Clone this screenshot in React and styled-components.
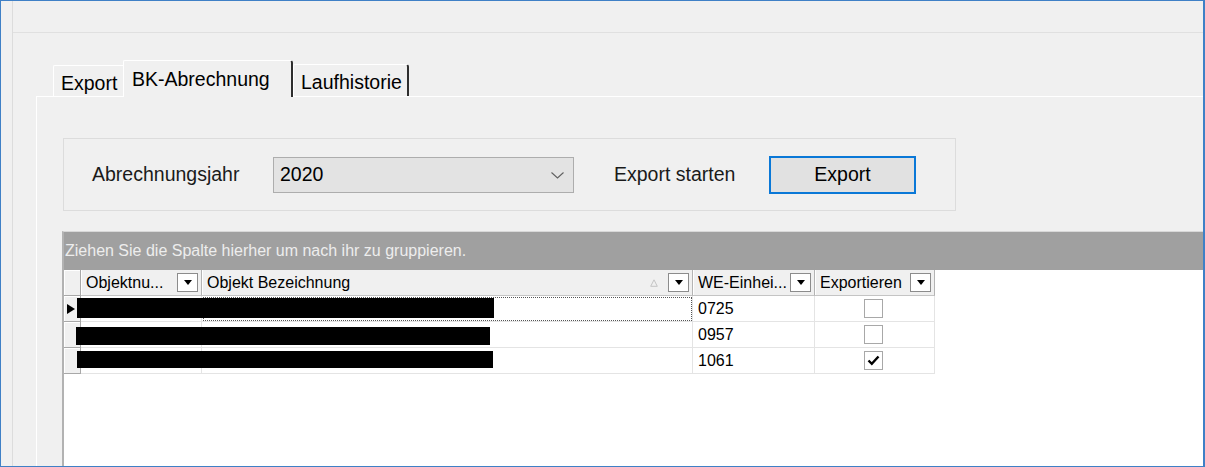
import React from "react";
import styled, { createGlobalStyle } from "styled-components";

const GlobalStyle = createGlobalStyle`
  *, *::before, *::after { box-sizing: border-box; }
  html, body { margin: 0; padding: 0; background: #fff; }
  body { font-family: "Liberation Sans", Arial, sans-serif; color: #000; }
`;

const COLS = "17px 121px 491px 122px 120px";

const rows = [
  { nr: "0725", checked: false, active: true, bar: { left: 13, top: 2, width: 417, height: 20 } },
  { nr: "0957", checked: false, bar: { left: 12, top: 5, width: 414, height: 18 } },
  { nr: "1061", checked: true, bar: { left: 13, top: 3, width: 416, height: 17 } },
];

const Chevron = () => (
  <svg width="13" height="7" viewBox="0 0 13 7">
    <path d="M0.5 0.5 L6.5 6 L12.5 0.5" fill="none" stroke="#606060" strokeWidth="1.1" />
  </svg>
);

const SortMark = () => (
  <svg width="8" height="8" viewBox="0 0 8 8">
    <path d="M4 0.8 L7.3 7.3 L0.7 7.3 Z" fill="none" stroke="#c4c4c4" strokeWidth="1" />
  </svg>
);

const Check = () => (
  <svg width="13" height="11" viewBox="0 0 13 11">
    <path d="M1.5 5.5 L4.8 8.8 L11.5 1.5" fill="none" stroke="#000" strokeWidth="2.4" />
  </svg>
);

const App = () => {
  return (
    <>
      <GlobalStyle />
      <Window>
        <LeftStrip />
        <Main>
          <TopStrip />
          <TabArea>
            <TabStrip>
              <Tab $w={70} $h={31} $pt={6}>Export</Tab>
              <Tab $w={170} $h={37} $pt={7} $active $dark>
                BK-Abrechnung
              </Tab>
              <Tab $w={116} $h={32} $pt={6} $dark>
                Laufhistorie
              </Tab>
            </TabStrip>

            <Panel>
              <GroupBox>
                <FieldLabel $w={181} $ml={28}>Abrechnungsjahr</FieldLabel>
                <Combo>
                  <span>2020</span>
                  <Chevron />
                </Combo>
                <FieldLabel $w={155} $ml={40}>Export starten</FieldLabel>
                <ExportButton>Export</ExportButton>
              </GroupBox>

              <Grid>
                <GroupBand>Ziehen Sie die Spalte hierher um nach ihr zu gruppieren.</GroupBand>
                <HeaderRow>
                  <IndicatorCell $head />
                  <HeadCell>
                    <HeadText>Objektnu...</HeadText>
                    <FilterBtn />
                  </HeadCell>
                  <HeadCell>
                    <HeadText>Objekt Bezeichnung</HeadText>
                    <SortSlot>
                      <SortMark />
                    </SortSlot>
                    <FilterBtn />
                  </HeadCell>
                  <HeadCell>
                    <HeadText>WE-Einhei...</HeadText>
                    <FilterBtn />
                  </HeadCell>
                  <HeadCell>
                    <HeadText>Exportieren</HeadText>
                    <FilterBtn />
                  </HeadCell>
                </HeaderRow>

                {rows.map((r) => (
                  <DataRow key={r.nr}>
                    <IndicatorCell>{r.active && <Arrow />}</IndicatorCell>
                    <Cell />
                    <Cell $focus={r.active} />
                    <Cell>{r.nr}</Cell>
                    <Cell $center>
                      <CheckBox>{r.checked && <Check />}</CheckBox>
                    </Cell>
                    <Redaction
                      style={{
                        left: r.bar.left,
                        top: r.bar.top,
                        width: r.bar.width,
                        height: r.bar.height,
                      }}
                    />
                  </DataRow>
                ))}
              </Grid>
            </Panel>
          </TabArea>
        </Main>
      </Window>
    </>
  );
};

const Window = styled.div`
  width: 1205px;
  height: 467px;
  display: flex;
  background: #f0f0f0;
  border: 1px solid #3f80c6;
  border-right-width: 2px;
  overflow: hidden;
`;

const LeftStrip = styled.div`
  width: 12px;
  flex-shrink: 0;
  border-right: 1px solid #dcdcdc;
`;

const Main = styled.div`
  flex: 1;
  display: flex;
  flex-direction: column;
  min-width: 0;
`;

const TopStrip = styled.div`
  height: 32px;
  flex-shrink: 0;
  border-bottom: 1px solid #e0e0e0;
`;

const TabArea = styled.div`
  flex: 1;
  display: flex;
  flex-direction: column;
  padding-left: 23px;
  min-height: 0;
`;

const TabStrip = styled.div`
  height: 63px;
  flex-shrink: 0;
  display: flex;
  align-items: flex-end;
  padding-left: 17px;
`;

const Tab = styled.div`
  width: ${(p) => p.$w}px;
  height: ${(p) => p.$h}px;
  padding: ${(p) => p.$pt}px 0 0 ${(p) => (p.$active ? 8 : 7)}px;
  font-size: 19.5px;
  line-height: 22px;
  color: #000;
  background: #f0f0f0;
  border-top: 1px solid #fff;
  border-left: 1px solid #fff;
  border-right: ${(p) => (p.$dark ? "2px solid #2e2e2e" : "none")};
  border-top-left-radius: 2px;
  border-top-right-radius: ${(p) => (p.$dark ? "3px" : "0")};
  margin-bottom: ${(p) => (p.$active ? "-1px" : "0")};
  position: relative;
  z-index: ${(p) => (p.$active ? 1 : 0)};
  white-space: nowrap;
`;

const Panel = styled.div`
  flex: 1;
  display: flex;
  flex-direction: column;
  border-top: 1px solid #fff;
  border-left: 1px solid #fff;
  padding: 41px 0 0 26px;
  min-height: 0;
`;

const GroupBox = styled.div`
  width: 893px;
  height: 73px;
  flex-shrink: 0;
  display: flex;
  align-items: center;
  border: 1px solid #dcdcdc;
`;

const FieldLabel = styled.div`
  width: ${(p) => p.$w}px;
  margin-left: ${(p) => p.$ml}px;
  font-size: 19.5px;
  color: #1a1a1a;
  white-space: nowrap;
`;

const Combo = styled.div`
  width: 301px;
  height: 36px;
  display: flex;
  align-items: center;
  justify-content: space-between;
  padding: 0 9px 0 6px;
  background: #e3e3e3;
  border: 1px solid #adadad;
  font-size: 19.5px;
  color: #000;

  svg {
    margin-top: 1px;
  }
`;

const ExportButton = styled.div`
  width: 147px;
  height: 38px;
  display: flex;
  align-items: center;
  justify-content: center;
  background: #e1e1e1;
  border: 2px solid #0a78d7;
  font-size: 19.5px;
  color: #000;
`;

const Grid = styled.div`
  flex: 1;
  margin-top: 20px;
  margin-left: -1px;
  background: #fff;
  border-left: 2px solid #b2b2b2;
  border-top: 1px solid #d8d8d8;
  display: flex;
  flex-direction: column;
  position: relative;
`;

const GroupBand = styled.div`
  height: 38px;
  flex-shrink: 0;
  display: flex;
  align-items: center;
  padding-left: 1px;
  background: #a0a0a0;
  color: #ededed;
  font-size: 16px;
  white-space: nowrap;
`;

const HeaderRow = styled.div`
  display: grid;
  grid-template-columns: ${COLS};
  height: 26px;
  width: 871px;
`;

const DataRow = styled.div`
  display: grid;
  grid-template-columns: ${COLS};
  height: 26px;
  width: 871px;
  position: relative;
`;

const IndicatorCell = styled.div`
  background: #f0f0f0;
  border-right: 1px solid #a8a8a8;
  border-bottom: 1px solid #a8a8a8;
  box-shadow: inset 1px 1px 0 #fff;
  display: flex;
  align-items: center;
  padding-left: 3px;
`;

const Arrow = styled.div`
  width: 0;
  height: 0;
  border-top: 5px solid transparent;
  border-bottom: 5px solid transparent;
  border-left: 8px solid #000;
`;

const HeadCell = styled.div`
  display: flex;
  align-items: center;
  padding: 0 3px 0 5px;
  background: #f0f0f0;
  border-right: 1px solid #b4b4b4;
  border-bottom: 1px solid #c4c4c4;
  box-shadow: inset 1px 0 0 #fff;
  font-size: 16px;
  color: #000;
  min-width: 0;
`;

const HeadText = styled.span`
  flex: 1;
  white-space: nowrap;
  overflow: hidden;
`;

const SortSlot = styled.span`
  display: flex;
  margin-right: 10px;
`;

const FilterBtn = styled.div`
  width: 21px;
  height: 19px;
  flex-shrink: 0;
  background: #fff;
  border: 1px solid #8c8c8c;
  display: flex;
  align-items: center;
  justify-content: center;

  &::after {
    content: "";
    border-left: 4px solid transparent;
    border-right: 4px solid transparent;
    border-top: 5px solid #000;
  }
`;

const Cell = styled.div`
  display: flex;
  align-items: center;
  justify-content: ${(p) => (p.$center ? "center" : "flex-start")};
  padding-left: ${(p) => (p.$center ? 0 : 5)}px;
  background: #fff;
  border-right: 1px solid #e4e4e4;
  border-bottom: 1px solid #e4e4e4;
  font-size: 16px;
  color: #000;
  outline: ${(p) => (p.$focus ? "1px dotted #555" : "none")};
  outline-offset: -2px;
`;

const CheckBox = styled.div`
  width: 19px;
  height: 19px;
  margin-left: -3px;
  background: #fff;
  border: 1px solid #a8a8a8;
  display: flex;
  align-items: center;
  justify-content: center;
`;

const Redaction = styled.div`
  position: absolute;
  background: #000;
`;

export default App;
